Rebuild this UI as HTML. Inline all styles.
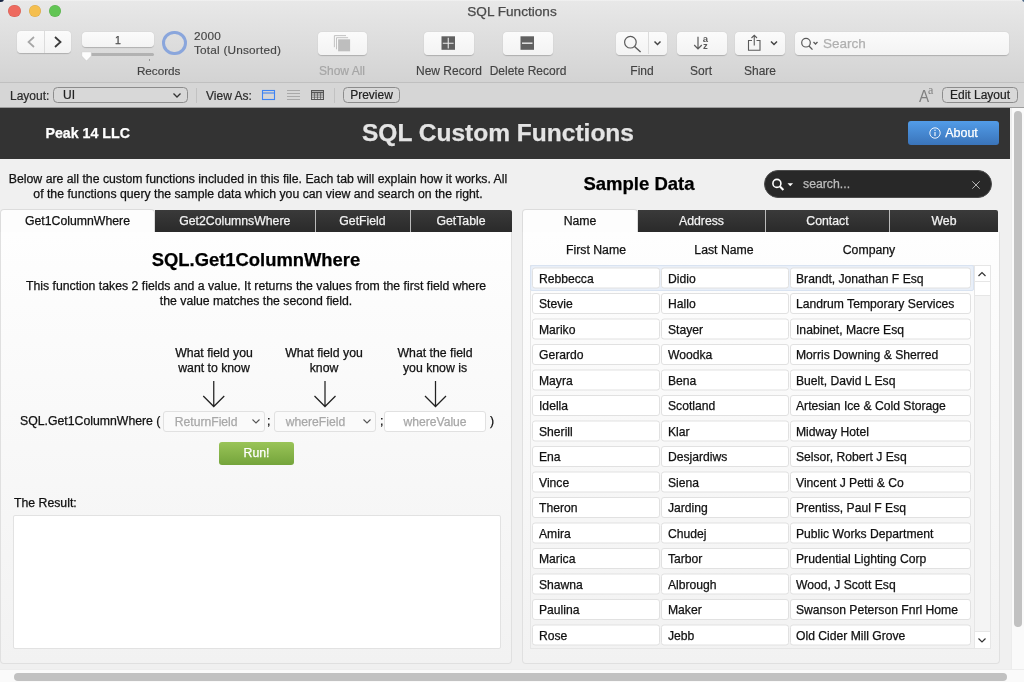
<!DOCTYPE html>
<html>
<head>
<meta charset="utf-8">
<title>SQL Functions</title>
<style>
*{box-sizing:border-box;margin:0;padding:0}
html,body{width:1024px;height:682px;overflow:hidden;background:#f0f0f0;font-family:"Liberation Sans",sans-serif;color:#111;-webkit-text-stroke-width:.25px}
.abs{position:absolute}
#win{position:absolute;left:0;top:0;width:1024px;height:682px;overflow:hidden;background:#f0f0f0;will-change:transform}
/* ---------- title + toolbar ---------- */
#chrome{left:0;top:0;width:1024px;height:83px;background:linear-gradient(#f3f3f3 0,#e8e8e8 1.500px,#e2e2e2 24px,#d3d3d3 82px);border-bottom:1px solid #c0c0c0}
#title{left:0;top:4px;width:1024px;text-align:center;font-size:13.600px;color:#4a4a4a;line-height:16px}
.tl{width:12.400px;height:12.400px;border-radius:50%;top:5.100px;box-shadow:inset 0 0 0 .500px rgba(0,0,0,.12)}
.tbtn{background:linear-gradient(#fbfbfb,#f3f3f3);border-radius:4px;box-shadow:0 .5px 1px rgba(0,0,0,.2);top:32px;height:22.500px}
.tlabel{top:64px;font-size:12px;line-height:14px;color:#424242;-webkit-text-stroke:.15px #424242;text-align:center;width:100px}
/* ---------- layout bar ---------- */
#lbar{left:0;top:83px;width:1024px;height:25px;background:#d6d6d6}
.lb{font-size:12px;line-height:14px;color:#2b2b2b;-webkit-text-stroke:.2px #2b2b2b;margin-top:1px}
.pill{border:1px solid #8c8c8c;border-radius:4.500px;height:16px;top:87px;background:#d8d8d8;font-size:12px;line-height:15px;color:#222;-webkit-text-stroke:.2px #222}
/* ---------- header ---------- */
#hdr{left:0;top:108px;width:1010px;height:51px;background:#333}
/* ---------- tabs ---------- */
.tab{top:210px;height:22px;background:linear-gradient(#3a3a3a,#2a2a2a);color:#f2f2f2;font-size:12.27px;line-height:22px;text-align:center;border-right:1px solid #bbb}
.tab.on{background:#fdfdfd;color:#111;border:1px solid #dcdcdc;border-bottom:none;border-radius:4px 4px 0 0;height:23px}
.panel{background:linear-gradient(#fefefe,#f2f2f2);border:1px solid #e0e0e0;border-top:none;border-radius:0 0 4px 4px}
.t12{font-size:12.27px;line-height:14.5px}
.c{text-align:center}
.fld{height:21px;background:#fff;border:1px solid #e1e1e1;border-radius:3px;font-size:12.150px;line-height:20px;padding-left:6px;white-space:nowrap;overflow:hidden}
</style>
</head>
<body>
<div id="win">

<!-- ======= window chrome ======= -->
<div id="chrome" class="abs"></div>
<div class="abs" style="left:-1px;top:-1.500px;width:4.500px;height:3px;background:#1a2744;border-radius:0 0 4.500px 0"></div>
<div class="abs" style="left:1021.500px;top:-1.500px;width:4px;height:3px;background:#4a6786;border-radius:0 0 0 4px"></div>
<div class="abs" style="left:-1.500px;top:680.500px;width:3px;height:3px;background:#555;border-radius:0 3px 0 0"></div>
<div class="abs tl" style="left:8.200px;background:#ee6a5f"></div>
<div class="abs tl" style="left:28.500px;background:#f5bf4f"></div>
<div class="abs tl" style="left:48.800px;background:#62c554"></div>
<div id="title" class="abs">SQL Functions</div>

<!-- nav buttons -->
<div class="abs tbtn" style="left:17px;width:54px;top:31px;height:22px"></div>
<div class="abs" style="left:44px;top:31px;width:1px;height:22px;background:#dcdcdc"></div>
<svg class="abs" style="left:17px;top:31px" width="54" height="22" viewBox="0 0 54 22">
<path d="M17 6 L11.500 11 L17 16" fill="none" stroke="#a6a6a6" stroke-width="1.700"/>
<path d="M38 6 L43.5 11 L38 16" fill="none" stroke="#3a3a3a" stroke-width="1.8"/>
</svg>
<!-- record number -->
<div class="abs tbtn" style="left:82px;width:72px;top:31.500px;height:15px;font-size:10.500px;line-height:16px;text-align:center;color:#4a4a4a">1</div>
<div class="abs" style="left:84px;top:52.500px;width:70px;height:3.200px;background:#b2b2b2;border-radius:1.500px"></div>
<div class="abs" style="left:149px;top:59px;width:1px;height:2px;background:#999"></div>
<svg class="abs" style="left:81px;top:51px" width="12" height="12" viewBox="0 0 12 12"><path d="M1.500 .800 h8 q.800 0 .800 .800 v3.400 l-4.800 5 l-4.800 -5 v-3.400 q0 -.800 .800 -.800 z" fill="#fdfdfd" stroke="#c4c4c4" stroke-width=".500"/></svg>
<!-- circle -->
<div class="abs" style="left:162.200px;top:30.700px;width:24.400px;height:24.400px;border-radius:50%;border:3.300px solid #8aa6dc"></div>
<div class="abs" style="left:194px;top:29px;font-size:11.800px;line-height:14px;color:#464646;letter-spacing:.200px;-webkit-text-stroke-width:.150px">2000<br>Total (Unsorted)</div>
<div class="abs tlabel" style="left:108.700px;font-size:11.700px">Records</div>

<!-- show all -->
<div class="abs tbtn" style="left:318px;width:49px"></div>
<svg class="abs" style="left:318px;top:32px" width="49" height="22" viewBox="0 0 49 22">
<path d="M16.400 15.200 V3.600 H28" fill="none" stroke="#bcbcbc" stroke-width=".900"/>
<path d="M18.500 17.300 V5.700 H30.100" fill="none" stroke="#bcbcbc" stroke-width=".900"/>
<rect x="20.100" y="7.300" width="12" height="12" fill="#bebebe"/>
</svg>
<div class="abs tlabel" style="left:292px;color:#a6a6a6;-webkit-text-stroke:.2px #a6a6a6">Show All</div>
<!-- new record -->
<div class="abs tbtn" style="left:424px;width:50px"></div>
<svg class="abs" style="left:424px;top:32px" width="50" height="22" viewBox="0 0 50 22">
<rect x="17.500" y="4.300" width="13.500" height="13.500" fill="#606060"/>
<path d="M24.250 5.800 v10.800 M18.800 11.200 h10.800" stroke="#ececec" stroke-width="1.100"/>
</svg>
<div class="abs tlabel" style="left:399px">New Record</div>
<!-- delete record -->
<div class="abs tbtn" style="left:503px;width:50px"></div>
<svg class="abs" style="left:503px;top:32px" width="50" height="22" viewBox="0 0 50 22">
<rect x="17.500" y="4.300" width="13.500" height="13.500" fill="#606060"/>
<path d="M19 11.200 h10.500" stroke="#e4e4e4" stroke-width="1.500"/>
</svg>
<div class="abs tlabel" style="left:478px">Delete Record</div>
<!-- find -->
<div class="abs tbtn" style="left:616px;width:51px"></div>
<div class="abs" style="left:648px;top:32px;width:1px;height:22px;background:#dcdcdc"></div>
<svg class="abs" style="left:616px;top:32px" width="51" height="22" viewBox="0 0 51 22">
<circle cx="14.400" cy="10.200" r="5.800" fill="none" stroke="#5a5a5a" stroke-width="1.200"/>
<path d="M18.500 14.500 L24.600 20" stroke="#5a5a5a" stroke-width="1.400"/>
<path d="M38.5 9.5 L41.5 12.5 L44.5 9.5" fill="none" stroke="#444" stroke-width="1.5"/>
</svg>
<div class="abs tlabel" style="left:592px">Find</div>
<!-- sort -->
<div class="abs tbtn" style="left:677px;width:50px"></div>
<svg class="abs" style="left:677px;top:32px" width="50" height="22" viewBox="0 0 50 22">
<path d="M21 4.800 v12 M17.200 13 L21 17 L24.800 13" fill="none" stroke="#5a5a5a" stroke-width="1.200"/>
<text x="25.700" y="9.600" font-family="Liberation Sans" font-size="9.500" font-weight="bold" fill="#5a5a5a">a</text>
<text x="25.900" y="17.300" font-family="Liberation Sans" font-size="9.500" font-weight="bold" fill="#5a5a5a">z</text>
</svg>
<div class="abs tlabel" style="left:651px">Sort</div>
<!-- share -->
<div class="abs tbtn" style="left:735px;width:50px"></div>
<svg class="abs" style="left:735px;top:32px" width="50" height="22" viewBox="0 0 50 22">
<path d="M17 8.500 h-3.500 v9.700 h11.500 v-9.700 h-3.500" fill="none" stroke="#5a5a5a" stroke-width="1.100"/>
<path d="M19.250 13.500 v-10 M16.500 6 L19.250 3.200 L22 6" fill="none" stroke="#5a5a5a" stroke-width="1.100"/>
<path d="M36 9.500 L39 12.500 L42 9.500" fill="none" stroke="#444" stroke-width="1.500"/>
</svg>
<div class="abs tlabel" style="left:710px">Share</div>
<!-- search -->
<div class="abs tbtn" style="left:795px;width:214px"></div>
<svg class="abs" style="left:795px;top:32px" width="30" height="22" viewBox="0 0 30 22">
<circle cx="11" cy="10.700" r="4.300" fill="none" stroke="#5a5a5a" stroke-width="1.200"/>
<path d="M14 14 L17.500 17.600" stroke="#5a5a5a" stroke-width="1.300"/>
<path d="M18.500 10 L20.500 12 L22.500 10" fill="none" stroke="#5a5a5a" stroke-width="1.300"/>
</svg>
<div class="abs" style="left:823px;top:36px;font-size:13.5px;line-height:16px;color:#b0b0b0">Search</div>

<!-- ======= layout bar ======= -->
<div id="lbar" class="abs"></div>
<div class="abs lb" style="left:10px;top:88px">Layout:</div>
<div class="abs pill" style="left:53px;width:135px;padding-left:9px">UI</div>
<svg class="abs" style="left:170px;top:90px" width="14" height="10" viewBox="0 0 14 10"><path d="M3.5 3.5 L7 7 L10.5 3.5" fill="none" stroke="#333" stroke-width="1.3"/></svg>
<div class="abs" style="left:196px;top:88px;width:1px;height:15px;background:#c2c2c2"></div>
<div class="abs lb" style="left:206px;top:88px">View As:</div>
<svg class="abs" style="left:260px;top:86px" width="70" height="18" viewBox="0 0 70 18">
<rect x="2.5" y="4.5" width="12" height="9" fill="none" stroke="#3f84f2" stroke-width="1.1"/>
<path d="M2.5 7 h12" stroke="#3f84f2" stroke-width="1.1"/>
<path d="M27 4.500 h13 M27 7.500 h13 M27 10.500 h13 M27 13.500 h13" stroke="#a4a4a4" stroke-width=".900"/>
<rect x="51.5" y="4.5" width="12" height="9" fill="none" stroke="#555" stroke-width="1"/>
<path d="M51.5 6.5 h12" stroke="#555" stroke-width="1.6"/>
<path d="M51.5 9 h12 M51.5 11.2 h12 M54.5 6 v7.5 M57.5 6 v7.5 M60.5 6 v7.5" stroke="#555" stroke-width=".7"/>
</svg>
<div class="abs" style="left:334px;top:88px;width:1px;height:15px;background:#c2c2c2"></div>
<div class="abs pill c" style="left:343px;width:57px">Preview</div>
<div class="abs" style="left:918.500px;top:85.500px;font-size:16.500px;line-height:20px;color:#808080;-webkit-text-stroke-width:0;transform:scaleX(.92);transform-origin:0 0">A</div>
<div class="abs" style="left:928px;top:82.500px;font-size:12px;line-height:14px;color:#808080;-webkit-text-stroke-width:0;font-family:'Liberation Serif',serif">a</div>
<div class="abs pill c" style="left:942px;width:76px">Edit Layout</div>
<div class="abs" style="left:0;top:107px;width:1024px;height:1px;background:#9c9c9c"></div>

<!-- ======= dark header ======= -->
<div id="hdr" class="abs"></div>
<div class="abs" style="left:45.500px;top:125px;font-size:14.200px;line-height:16px;font-weight:bold;color:#fff">Peak 14 LLC</div>
<div class="abs c" style="left:248px;top:118px;width:500px;font-size:24.53px;line-height:29px;font-weight:bold;color:#e4e4e4">SQL Custom Functions</div>
<div class="abs c" style="left:908px;top:121px;width:91px;height:24px;background:linear-gradient(#529ce8,#3a74ba);border:none;border-radius:3px;color:#fff;font-size:12.5px;line-height:24px;padding-left:16px">About</div>
<svg class="abs" style="left:928px;top:126px" width="14" height="14" viewBox="0 0 14 14"><circle cx="7" cy="7" r="5.2" fill="none" stroke="#fff" stroke-width=".9"/><path d="M7 6 v4" stroke="#fff" stroke-width="1.1"/><circle cx="7" cy="4.3" r=".7" fill="#fff"/></svg>

<!-- ======= description + sample data ======= -->
<div class="abs t12 c" style="left:0;top:172px;width:516px">Below are all the custom functions included in this file. Each tab will explain how it works. All<br>of the functions query the sample data which you can view and search on the right.</div>
<div class="abs c" style="left:539px;top:173px;width:200px;font-size:18.5px;line-height:22px;font-weight:bold;color:#000">Sample Data</div>
<div class="abs" style="left:763.500px;top:170.300px;width:228px;height:28px;border-radius:14px;background:#282828;border:1.500px solid #4c4c4c"></div>
<svg class="abs" style="left:770px;top:176px" width="30" height="16" viewBox="0 0 30 16"><circle cx="6.900" cy="7.400" r="4" fill="none" stroke="#fff" stroke-width="1.600"/><path d="M10 10.500 L13.400 14" stroke="#fff" stroke-width="2"/><path d="M17.500 7.300 h5.600 l-2.800 3 z" fill="#fff"/></svg>
<div class="abs" style="left:803px;top:177px;font-size:12.27px;line-height:14.5px;color:#bdbdbd">search...</div>
<svg class="abs" style="left:970px;top:179px" width="12" height="12" viewBox="0 0 12 12"><path d="M2.300 2.300 L9.700 9.700 M9.700 2.300 L2.300 9.700" stroke="#c4c4c4" stroke-width=".900"/></svg>

<!-- ======= left tab panel ======= -->
<div class="abs panel" style="left:0;top:232px;width:512px;height:431.500px"></div>
<div class="abs tab" style="left:155px;width:160.500px">Get2ColumnsWhere</div>
<div class="abs tab" style="left:315.500px;width:95px">GetField</div>
<div class="abs tab" style="left:410.500px;width:101px;border-right:none;border-radius:0 2px 0 0">GetTable</div>
<div class="abs tab on" style="left:0;width:155px;top:209px;line-height:23px">Get1ColumnWhere</div>

<div class="abs c" style="left:0;top:249px;width:512px;font-size:18.4px;line-height:22px;font-weight:bold;color:#000">SQL.Get1ColumnWhere</div>
<div class="abs t12 c" style="left:0;top:279px;width:512px">This function takes 2 fields and a value. It returns the values from the first field where<br>the value matches the second field.</div>

<div class="abs t12 c" style="left:154px;top:346px;width:120px">What field you<br>want to know</div>
<div class="abs t12 c" style="left:264px;top:346px;width:120px">What field you<br>know</div>
<div class="abs t12 c" style="left:375px;top:346px;width:120px">What the field<br>you know is</div>
<svg class="abs" style="left:190px;top:379.250px" width="270" height="32" viewBox="0 0 270 32">
<g fill="none" stroke="#222" stroke-width="1.250">
<path d="M23.750 2 v25 M13.250 17 L23.750 27.500 L34.250 17"/>
<path d="M135 2 v25 M124.500 17 L135 27.500 L145.500 17"/>
<path d="M245.500 2 v25 M235 17 L245.500 27.500 L256 17"/>
</g></svg>

<div class="abs" style="left:20px;top:414px;font-size:12.27px;line-height:14.5px">SQL.Get1ColumnWhere (</div>
<div class="abs fld" style="left:163px;top:411px;width:102px;height:21px;color:#a8a8a8;padding-left:10.800px;line-height:20.500px;background:#fafafa">ReturnField</div>
<div class="abs fld" style="left:274px;top:411px;width:102px;height:21px;color:#a8a8a8;padding-left:10.800px;line-height:20.500px;background:#fafafa">whereField</div>
<div class="abs fld c" style="left:384px;top:411px;width:102px;height:21px;color:#a8a8a8;padding-left:0;line-height:20.500px">whereValue</div>
<svg class="abs" style="left:249.750px;top:416px" width="12" height="10" viewBox="0 0 12 10"><path d="M2.500 3.500 L6 7 L9.500 3.500" fill="none" stroke="#555" stroke-width="1.1"/></svg>
<svg class="abs" style="left:360.750px;top:416px" width="12" height="10" viewBox="0 0 12 10"><path d="M2.500 3.500 L6 7 L9.500 3.500" fill="none" stroke="#555" stroke-width="1.1"/></svg>
<div class="abs" style="left:267px;top:414px;font-size:12.27px;line-height:14.5px">;</div>
<div class="abs" style="left:380px;top:414px;font-size:12.27px;line-height:14.5px">;</div>
<div class="abs" style="left:490px;top:414px;font-size:12.27px;line-height:14.5px">)</div>

<div class="abs c" style="left:219px;top:442px;width:75px;height:22.500px;background:linear-gradient(#9ac458,#74a43b);border-radius:3px;color:#fff;font-size:12.270px;line-height:22px">Run!</div>

<div class="abs" style="left:14px;top:496px;font-size:12.27px;line-height:14.5px">The Result:</div>
<div class="abs" style="left:13px;top:515px;width:488px;height:134px;background:#fff;border:1px solid #e2e2e2;border-radius:2px"></div>

<!-- ======= right tab panel ======= -->
<div class="abs panel" style="left:522px;top:232px;width:477.500px;height:431.500px"></div>
<div class="abs tab" style="left:638px;width:128px">Address</div>
<div class="abs tab" style="left:766px;width:124px">Contact</div>
<div class="abs tab" style="left:890px;width:108px;border-right:none;border-radius:0 2px 0 0">Web</div>
<div class="abs tab on" style="left:522px;width:116px;top:209px;line-height:23px">Name</div>

<div class="abs c" style="left:536px;top:243px;width:120px;font-size:12.27px;line-height:14.5px">First Name</div>
<div class="abs c" style="left:664px;top:243px;width:120px;font-size:12.27px;line-height:14.5px">Last Name</div>
<div class="abs c" style="left:809px;top:243px;width:120px;font-size:12.27px;line-height:14.5px">Company</div>

<div id="rows">
<div class="abs" style="left:529.500px;top:264.500px;width:461px;height:384px;border:1px solid #e6e6e6;background:transparent"></div>
<div class="abs" style="left:529.500px;top:264.500px;width:444.500px;height:26.300px;background:#e9eff8;border:1px solid #d9e3f1;border-radius:2px"></div>
<div class="abs" style="left:0;top:0;width:1010px;height:660px;transform:translateY(.5px)">
<div class="abs fld" style="left:532px;top:267px;width:128px">Rebbecca</div><div class="abs fld" style="left:661px;top:267px;width:128px">Didio</div><div class="abs fld" style="left:789.500px;top:267px;width:181.500px;padding-left:5.500px">Brandt, Jonathan F Esq</div>
<div class="abs fld" style="left:532px;top:318px;width:128px">Mariko</div><div class="abs fld" style="left:661px;top:318px;width:128px">Stayer</div><div class="abs fld" style="left:789.500px;top:318px;width:181.500px;padding-left:5.500px">Inabinet, Macre Esq</div>
<div class="abs fld" style="left:532px;top:369px;width:128px">Mayra</div><div class="abs fld" style="left:661px;top:369px;width:128px">Bena</div><div class="abs fld" style="left:789.500px;top:369px;width:181.500px;padding-left:5.500px">Buelt, David L Esq</div>
<div class="abs fld" style="left:532px;top:420px;width:128px">Sherill</div><div class="abs fld" style="left:661px;top:420px;width:128px">Klar</div><div class="abs fld" style="left:789.500px;top:420px;width:181.500px;padding-left:5.500px">Midway Hotel</div>
<div class="abs fld" style="left:532px;top:471px;width:128px">Vince</div><div class="abs fld" style="left:661px;top:471px;width:128px">Siena</div><div class="abs fld" style="left:789.500px;top:471px;width:181.500px;padding-left:5.500px">Vincent J Petti &amp; Co</div>
<div class="abs fld" style="left:532px;top:522px;width:128px">Amira</div><div class="abs fld" style="left:661px;top:522px;width:128px">Chudej</div><div class="abs fld" style="left:789.500px;top:522px;width:181.500px;padding-left:5.500px">Public Works Department</div>
<div class="abs fld" style="left:532px;top:573px;width:128px">Shawna</div><div class="abs fld" style="left:661px;top:573px;width:128px">Albrough</div><div class="abs fld" style="left:789.500px;top:573px;width:181.500px;padding-left:5.500px">Wood, J Scott Esq</div>
<div class="abs fld" style="left:532px;top:624px;width:128px">Rose</div><div class="abs fld" style="left:661px;top:624px;width:128px">Jebb</div><div class="abs fld" style="left:789.500px;top:624px;width:181.500px;padding-left:5.500px">Old Cider Mill Grove</div>
</div>
<div class="abs fld" style="left:532px;top:293px;width:128px">Stevie</div><div class="abs fld" style="left:661px;top:293px;width:128px">Hallo</div><div class="abs fld" style="left:789.500px;top:293px;width:181.500px;padding-left:5.500px">Landrum Temporary Services</div>
<div class="abs fld" style="left:532px;top:344px;width:128px">Gerardo</div><div class="abs fld" style="left:661px;top:344px;width:128px">Woodka</div><div class="abs fld" style="left:789.500px;top:344px;width:181.500px;padding-left:5.500px">Morris Downing &amp; Sherred</div>
<div class="abs fld" style="left:532px;top:395px;width:128px">Idella</div><div class="abs fld" style="left:661px;top:395px;width:128px">Scotland</div><div class="abs fld" style="left:789.500px;top:395px;width:181.500px;padding-left:5.500px">Artesian Ice &amp; Cold Storage</div>
<div class="abs fld" style="left:532px;top:446px;width:128px">Ena</div><div class="abs fld" style="left:661px;top:446px;width:128px">Desjardiws</div><div class="abs fld" style="left:789.500px;top:446px;width:181.500px;padding-left:5.500px">Selsor, Robert J Esq</div>
<div class="abs fld" style="left:532px;top:497px;width:128px">Theron</div><div class="abs fld" style="left:661px;top:497px;width:128px">Jarding</div><div class="abs fld" style="left:789.500px;top:497px;width:181.500px;padding-left:5.500px">Prentiss, Paul F Esq</div>
<div class="abs fld" style="left:532px;top:548px;width:128px">Marica</div><div class="abs fld" style="left:661px;top:548px;width:128px">Tarbor</div><div class="abs fld" style="left:789.500px;top:548px;width:181.500px;padding-left:5.500px">Prudential Lighting Corp</div>
<div class="abs fld" style="left:532px;top:599px;width:128px">Paulina</div><div class="abs fld" style="left:661px;top:599px;width:128px">Maker</div><div class="abs fld" style="left:789.500px;top:599px;width:181.500px;padding-left:5.500px">Swanson Peterson Fnrl Home</div>
<div class="abs" style="left:973.500px;top:264.500px;width:17px;height:384px;background:#f4f4f4;border:1px solid #e6e6e6"></div>
<div class="abs" style="left:973.500px;top:264.500px;width:17px;height:17.500px;background:#fff;border:1px solid #e6e6e6"></div>
<div class="abs" style="left:973.500px;top:281px;width:17px;height:15px;background:#fff;border:1px solid #e6e6e6"></div>
<div class="abs" style="left:973.500px;top:631px;width:17px;height:17.500px;background:#fff;border:1px solid #e6e6e6"></div>
<svg class="abs" style="left:975.500px;top:269px" width="12" height="10" viewBox="0 0 12 10"><path d="M2.500 7 L6 3.500 L9.500 7" fill="none" stroke="#333" stroke-width="1.200"/></svg>
<svg class="abs" style="left:975.500px;top:634.500px" width="12" height="10" viewBox="0 0 12 10"><path d="M2.500 3.500 L6 7 L9.500 3.500" fill="none" stroke="#333" stroke-width="1.200"/></svg>
</div><!--endrows-->

<!-- ======= scrollbars ======= -->
<div class="abs" style="left:1010.500px;top:108px;width:14px;height:574px;background:#fafafa;border-left:1px solid #ececec"></div>
<div class="abs" style="left:1014px;top:111px;width:7.500px;height:516px;background:#c1c1c1;border-radius:4px"></div>
<div class="abs" style="left:0;top:669px;width:1024px;height:13px;background:#fafafa;border-top:1px solid #ededed"></div>
<div class="abs" style="left:14px;top:672.750px;width:992.500px;height:7.750px;background:#c1c1c1;border-radius:4px"></div>

</div>
</body>
</html>
